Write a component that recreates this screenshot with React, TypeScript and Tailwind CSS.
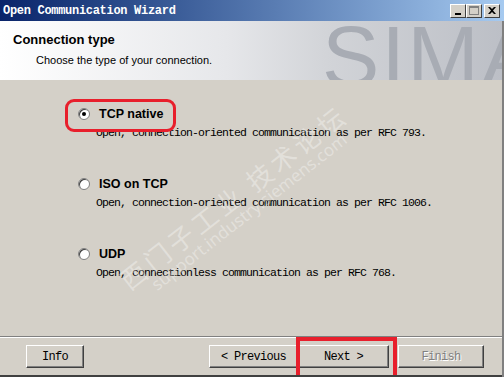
import React from "react";

const mono = { fontFamily: '"Liberation Mono", "Noto Sans CJK SC", monospace' };
const sans = { fontFamily: '"Liberation Sans", Arial, sans-serif' };

const Radio = ({ checked }: { checked?: boolean }) => (
  <span className="relative inline-block w-[12px] h-[12px] rounded-full bg-white border border-[#808080] shadow-[inset_1px_1px_0_#404040]">
    {checked && (
      <span className="absolute left-[3px] top-[3px] w-[4px] h-[4px] rounded-full bg-black" />
    )}
  </span>
);

const Option = ({
  label,
  desc,
  checked,
  boxed,
}: {
  label: string;
  desc: string;
  checked?: boolean;
  boxed?: boolean;
}) => (
  <div className="flex flex-col pl-[78px]">
    <div className="relative flex items-center gap-[9px] h-[20px]">
      <Radio checked={checked} />
      <span className="text-[12.5px] font-bold text-black" style={sans}>
        {label}
      </span>
      {boxed && (
        <span className="absolute left-[-13px] top-[-5px] w-[111px] h-[33px] rounded-[9px] border-[3px] border-[#e81f2c]" />
      )}
    </div>
    <div className="pl-[18px] mt-[2px] text-[11.5px] tracking-[-0.9px] text-black leading-[14px]" style={mono}>
      {desc}
    </div>
  </div>
);

const Btn = ({ text, w, disabled }: { text: string; w: number; disabled?: boolean }) => (
  <div
    className={`h-[23px] flex items-center justify-center bg-[#d4d0c8] border border-t-white border-l-white border-r-[#404040] border-b-[#404040] shadow-[inset_-1px_-1px_0_#808080] text-[12px] tracking-[-0.7px] ${
      disabled ? "text-[#808080] [text-shadow:1px_1px_0_#fff]" : "text-black"
    }`}
    style={{ ...mono, width: w }}
  >
    {text}
  </div>
);

export default function App() {
  return (
    <div className="w-[504px] h-[377px] overflow-hidden bg-[#d4d0c8] flex flex-col relative">
      {/* title bar */}
      <div className="h-[21px] flex items-center justify-between px-[3px] bg-gradient-to-r from-[#0a246a] to-[#a6caf0]">
        <span className="text-white text-[12px] font-bold tracking-[-0.3px]" style={mono}>
          Open Communication Wizard
        </span>
        <div className="flex items-center pr-[1px]">
          <div className="w-[16px] h-[14px] bg-[#d4d0c8] border border-t-white border-l-white border-r-[#404040] border-b-[#404040] flex items-end justify-center pb-[2px]">
            <span className="w-[6px] h-[2px] bg-black" />
          </div>
          <div className="w-[16px] h-[14px] bg-[#d4d0c8] border border-t-white border-l-white border-r-[#404040] border-b-[#404040] flex items-center justify-center">
            <span className="w-[10px] h-[9px] border border-[#808080] border-t-2" />
          </div>
          <div className="ml-[2px] w-[16px] h-[14px] bg-[#d4d0c8] border border-t-white border-l-white border-r-[#404040] border-b-[#404040] flex items-center justify-center">
            <svg width="8" height="7" viewBox="0 0 8 7">
              <path d="M0 0h2l2 2 2-2h2L5 3.5 8 7H6L4 5 2 7H0l3-3.5z" fill="#000" />
            </svg>
          </div>
        </div>
      </div>

      {/* header */}
      <div className="relative h-[59px] overflow-hidden bg-[linear-gradient(90deg,#ffffff_0%,#e6e7ea_45%,#d2d4d8_65%,#bcbfc6_100%)] pt-[11px] pl-[13px] mr-[2px]">
        <span
          className="absolute left-[322px] top-[-8px] text-[86px] leading-none text-[#a8acb4] tracking-[2px]"
          style={sans}
        >
          SIMA
        </span>
        <div className="relative text-[13px] font-bold text-black leading-[16px]" style={sans}>
          Connection type
        </div>
        <div className="relative mt-[5px] pl-[23px] text-[11px] text-black leading-[14px]" style={sans}>
          Choose the type of your connection.
        </div>
      </div>

      {/* body */}
      <div className="relative flex-1 flex flex-col pt-[24px] gap-[34px]">
        <Option
          label="TCP native"
          desc="Open, connection-oriented communication as per RFC 793."
          checked
          boxed
        />
        <Option label="ISO on TCP" desc="Open, connection-oriented communication as per RFC 1006." />
        <Option label="UDP" desc="Open, connectionless communication as per RFC 768." />

        {/* watermark */}
        <div
          className="pointer-events-none absolute left-[128px] top-[188px] -rotate-[38deg] origin-left text-white/35 leading-none"
          style={{ fontFamily: '"Noto Sans CJK SC", sans-serif' }}
        >
          <div className="text-[26px] tracking-[4px]">西门子工业 技术论坛</div>
          <div className="text-[17px] ml-[22px]" style={{ fontFamily: '"Noto Sans", sans-serif' }}>
            support.industry.siemens.com
          </div>
        </div>
      </div>

      {/* separator */}
      <div className="h-[2px] mr-[2px] border-t border-[#808080] border-b border-b-white" />

      {/* buttons */}
      <div className="h-[39px] flex items-start pt-[7px] pl-[26px]">
        <Btn text="Info" w={58} />
        <div className="ml-[125px] flex">
          <Btn text="< Previous" w={89} />
          <div className="relative">
            <Btn text="Next >" w={91} />
            <span className="absolute left-[-2px] top-[-8px] w-[101px] h-[44px] border-[4px] border-[#e81f2c]" />
          </div>
          <div className="ml-[9px]">
            <Btn text="Finish" w={86} disabled />
          </div>
        </div>
      </div>
      <div className="absolute bottom-0 left-0 right-0 h-[2px] bg-[#404040]" />
      <div className="absolute top-[21px] bottom-0 right-0 w-[2px] bg-[#808080]" />
    </div>
  );
}
